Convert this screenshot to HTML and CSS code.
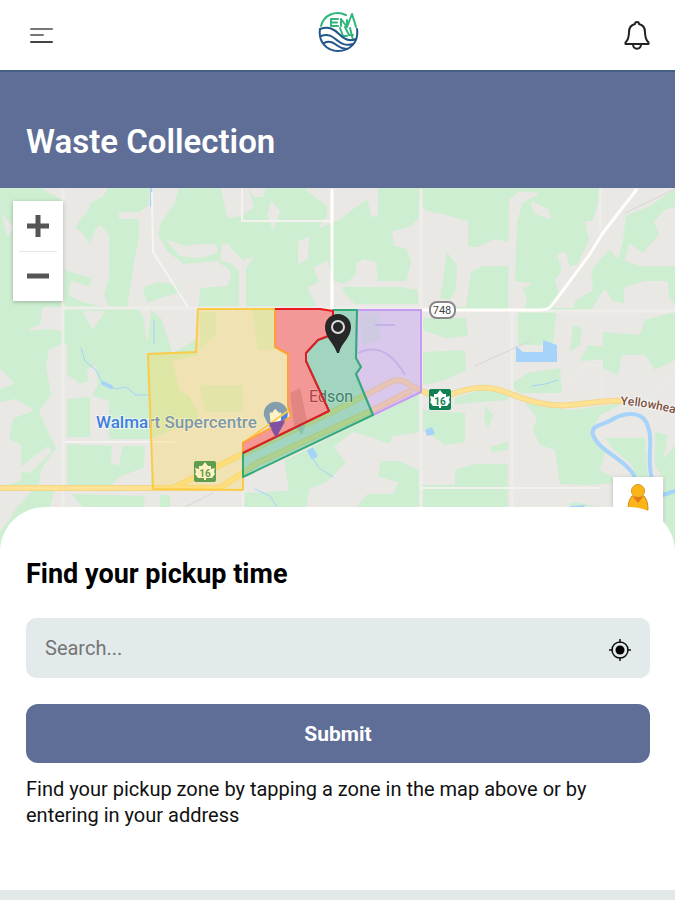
FILE: index.html
```html
<!DOCTYPE html>
<html lang="en">
<head>
<meta charset="utf-8">
<meta name="viewport" content="width=device-width, initial-scale=1">
<title>Waste Collection</title>
<link rel="stylesheet" href="styles.css">
</head>
<body>
<header class="topbar">
  <button class="icon-button" type="button" aria-label="Menu">
    <svg width="26" height="20" viewBox="0 0 26 20" fill="none" stroke-width="2" stroke-linecap="round">
      <path d="M3 4H24M3 10H15" stroke="#777"/><path d="M3 17H24" stroke="#444"/>
    </svg>
  </button>
  <a class="logo" href="#" aria-label="Home">
    <svg width="42" height="42" viewBox="0 0 42 42" fill="none" stroke-linecap="round" stroke-linejoin="round">
      <g stroke="#2fb67c" stroke-width="2">
        <path d="M3 15C6 4 17 -1 28 4"/>
        <path d="M20 8H13V15H20M14 11.500H19"/>
        <path d="M23 15V8L29 16L34 3L38 16M29 16V9"/>
        <path d="M22 17L25 25H29M27 16L31 24H35M32 17L35 29H31"/>
      </g>
      <g stroke="#24568a" stroke-width="2">
        <path d="M2 18C0 31 9 40 20 40C32 40 41 31 39 18"/>
        <path d="M2 18C11 15 16 18 21 23S32 31 38 28"/>
        <path d="M3 25C11 22 15 26 20 30S29 35 35 33"/>
        <path d="M6 32C12 29 16 32 20 35S26 38 29 38"/>
      </g>
    </svg>
  </a>
  <button class="icon-button" type="button" aria-label="Notifications">
    <svg width="26" height="30" viewBox="0 0 26 30" fill="none" stroke="#222" stroke-width="2" stroke-linejoin="round">
      <path d="M13 2C11.500 2 11 2.800 11 4C7 5 5 8 5 12C5 18 4 20 1.500 22.500V24H24.500V22.500C22 20 21 18 21 12C21 8 19 5 15 4C15 2.800 14.500 2 13 2Z"/>
      <path d="M9 24.500C9.500 30 16.500 30 17 24.500"/>
    </svg>
  </button>
</header>

<main>
  <div class="title-band"><h1>Waste Collection</h1></div>

  <section class="map" aria-label="Collection zones map">
    <svg class="map-art" viewBox="0 188 675 364" preserveAspectRatio="xMidYMin slice">
      <rect y="188" width="675" height="364" fill="#cdeed0"/>
      <!-- open land -->
      <g fill="#e9e8e5" stroke="#e9e8e5" stroke-width="2" stroke-linejoin="round">
        <path d="M43 188H107L102 196 90 202 87 211 80 218 74 228 83 235 91 247 95 232 100 226 108 235V278L103 295 108 307 83 301 70 295 72 282 90 288 93 277 67 270 63 265V200Z"/>
        <path d="M150 188H178L173 205 160 222 157 235 167 252 183 265 217 262 230 272 227 285 200 287 197 307H128L132 285 135 262 140 238V218H120V213L140 213 150 205Z"/>
        <path d="M168 241L185 247 200 245 215 245 217 252 200 257 180 255Z"/>
        <path d="M222 250L227 244 232 251 229 262 222 260ZM222 188H247L253 207 240 215 228 217ZM250 188H265L262 196 254 196Z"/>
        <path d="M43 308H63V330L43 328 30 330 41 325ZM84 312H103L93 328ZM140 310H150L147 338 145 318ZM153 310H197V338L173 352 162 318ZM3 216L12 227 8 235Z"/>
        <path d="M272 202L279 212 273 228 268 215ZM325 188H377V215L372 216 368 198 353 208 340 218 320 227 328 218V205L307 190ZM299 242L308 238 307 258 299 263Z"/>
        <path d="M222 245L237 255 243 262 252 258 245 268V307H240V270L225 258ZM220 265L230 278 220 285Z"/>
        <path d="M327 262L315 268 320 282 309 288 317 306H465L470 272 482 265H508V243L495 240 478 248H467V222L442 215 427 212 420 206V218L410 228 393 232 395 245 407 248 412 262 407 282H377L375 263 363 260 357 264V275L345 285 333 282Z"/>
        <path d="M510 200L520 192 537 194 522 202 516 222 514 282 530 284 522 288 526 300 522 312H509Z"/>
        <path d="M532 203L548 210 550 218 535 213ZM558 255L565 253 569 268 578 265 590 240 586 222 593 222 600 200V188H675L650 205 625 215 622 240 618 258 610 248 600 258 590 270 592 290 575 300 572 307H555L560 295 556 280 563 270Z"/>
        <path d="M675 208L665 211 655 222 660 235 643 254 630 245 626 260 640 265 675 265Z"/>
        <path d="M420 312H555L592 310 605 290 612 302 625 305V288L645 282 667 282 668 298 675 306V552H420Z"/>
        <path d="M47 367L50 350 61 345H66V375L80 385 90 382 88 370 95 367 97 385 90 396 66 398V485H40L42 470 57 448 40 412 52 395ZM0 370L13 383 0 388ZM0 403L15 400 32 410 12 418 8 440 20 445V480L0 486ZM18 470L48 447 50 452 30 472Z"/>
        <path d="M91 396L108 402V440H150V485H113L120 478 145 468 146 445H122L118 465 112 462 113 445 66 443V438H91ZM0 492H30L15 508 8 520 0 530ZM55 492H243V510H50Z"/>
        <path d="M245 478L283 460 288 490 245 492ZM353 433L335 447 347 463 327 483 310 490 307 510H353L367 493H393L397 483 377 477 380 460 400 460 420 470V433L393 437 390 445 367 437Z"/>
        <path d="M198 310H420V392L370 417 243 480V490H154L150 440 200 420 190 395 180 390 172 362 198 356Z"/>
      </g>
      <!-- parks and woods -->
      <g fill="#cdeed0">
        <path d="M143 288L157 282 177 285 180 292 160 298 147 303ZM343 287H400L418 290V304H355L343 292ZM447 252L457 265 456 290 450 300 440 298ZM475 295L480 305 508 306V267L482 267 478 280Z"/>
        <path d="M423 318L466 318 468 336 445 338 423 330ZM423 352L465 350 466 370 445 380 423 385ZM518 312H556L553 345H518ZM573 325L582 328 580 345 570 352ZM588 345L612 348 605 359 580 361Z"/>
        <path d="M603 332L640 335 645 320 675 312V360L655 370 645 355H622L618 375 603 368ZM528 373L560 368 562 393H520L510 385ZM455 398L480 390 508 392V400L480 402 455 405ZM423 410L465 413V442L445 445 423 430Z"/>
        <path d="M485 405L493 415 488 428 484 420ZM490 447L508 442V450L492 452ZM423 485H455V470L475 464H508V510H423ZM525 403L570 410 610 405 625 402 600 415 592 430 598 445 605 452 600 470 622 482 590 485 560 484 555 450 540 445 533 430 537 418Z"/>
        <path d="M605 438H645L648 480H636L632 465 612 448ZM655 432L668 435 663 460 675 445V552L664 520V480L655 465ZM565 505L575 502 600 507ZM72 494L145 496 143 510H85ZM160 495H170V510H160ZM650 332L675 324V340L660 345Z"/>
        <path d="M200 312H216V335L200 350ZM252 310H274V350H258ZM152 358H172L180 392 200 412 190 425 152 415ZM200 385H243V412H205ZM360 313H380V340L362 345Z" opacity=".7"/>
      </g>
      <!-- water -->
      <g fill="none" stroke="#a5d3fa" stroke-width="2" stroke-linecap="round">
        <path d="M151 189V206"/>
        <path d="M81 348L85 361 95 369 103 383 116 389 126 387 136 395 149 395M154 320V344M311 455L319 468 333 477M255 489L270 496 277 507M532 386L545 384 558 380" stroke-width="1"/>
        <path d="M310 449L315 458" stroke-width="7" stroke-linecap="butt"/>
        <path d="M103 383L111 387" stroke-width="4"/>
        <path d="M636 480C628 459 600 453 593 435C590 424 603 426 615 418C630 411 645 413 648 427C654 440 646 455 652 480M663 495L675 491" stroke-width="4"/>
      </g>
      <path d="M516 346L523 352H543V340L557 345V362H516ZM425 430L432 427 435 434 427 436ZM570 506L585 505 583 510H568Z" fill="#a5d3fa"/>
      <path d="M536 350L543 343V352Z" fill="#e9e8e5"/>
      <!-- minor roads -->
      <g fill="none" stroke="#eeede9" stroke-width="3">
        <path d="M63 189V510M63 308H430M421 189V510M512 312V510M600 189V230M508 311H675M243 480V510" />
        <path d="M242 189V221H332M63 442H175M421 488H600" stroke="#f3f2ef" stroke-width="2"/>
        <path d="M152 192L153 252 188 307" stroke="#f5f4f1" stroke-width="2"/>
        <path d="M569 381L584 365H602V400M640 407L675 370" stroke-width="1"/>
        <path d="M475 366L530 341M675 189L625 213M185 507L213 493" stroke="#d5d6d2" stroke-width="1"/>
      </g>
      <path d="M332 189V310M421 310H540Q549 310 552 305L590 254 602 234 637 189" fill="none" stroke="#fffefa" stroke-width="3"/>
      <!-- highways -->
      <g fill="none" stroke-linejoin="round">
        <path d="M0 488H173L230 460 330 413 393 381Q403 378 411 386L440 399 452 394C470 388 485 384 508 393S550 407 570 405S610 400 622 401M173 488H220L257 463 373 410 412 390" stroke="#f5d689" stroke-width="6"/>
        <path d="M0 488H173L230 460 330 413 393 381Q403 378 411 386L440 399 452 394C470 388 485 384 508 393S550 407 570 405S610 400 622 401M173 488H220L257 463 373 410 412 390" stroke="#fde293" stroke-width="4"/>
      </g>
      <path d="M358 353Q385 340 405 375M375 325H395" fill="none" stroke="#c9c6dc" stroke-width="2"/>
      <path d="M290 393L300 388 307 420 302 435 294 425Z" fill="#c9c6bd"/>
      <!-- map labels -->
      <g class="label">
        <text class="label-place" x="96" y="428">Walmart Supercentre</text>
        <text class="label-town" x="309" y="402">Edson</text>
        <path id="road-label" d="M621 405Q645 405 700 420" fill="none"/>
        <text class="label-road"><textPath href="#road-label">Yellowhea</textPath></text>
      </g>
      <g>
        <path d="M264 416A12 12 0 1 1 286 420L276 438 268 424Z" fill="#4b83df"/>
        <path d="M270 413H281L280 422H271ZM273 413Q275 406 278 413" fill="#fff" stroke="#fff"/>
      </g>
      <g>
        <rect x="194" y="461" width="22" height="21" rx="2" fill="#178252"/>
        <path d="M205 462L208 466 211 466V469L215 468 214 472 215 474 212 478 206 478V480H204V478L198 478 195 474 196 472 195 468 199 469V466L202 466Z" fill="#fff"/>
        <text class="shield-number" x="205" y="477">16</text>
      </g>
      <!-- collection zones -->
      <g stroke-width="2" stroke-linejoin="round">
        <path d="M198 309H275V347L288 354V411L243 443V490L153 489 148 354 196 352Z" fill="#ffd647" fill-opacity=".32" stroke="#fbcb47"/>
        <path d="M357 310H421V392L373 415 356 374 361 367 356 358Z" fill="#be8cf8" fill-opacity=".35" stroke="#c69bf3"/>
        <path d="M275 309H320L333 311V337H327L318 340 306 353V361L329 411 243 453V443L291 418 288 405V354L275 347Z" fill="#ff3838" fill-opacity=".45" stroke="none"/>
        <path d="M275 309V347L288 354V405L291 417 243 443V453" fill="none" stroke="#ffa03c"/>
        <path d="M333 310H357L356 358 361 367 356 374 373 415 243 477V453L329 411 306 361V353L318 340 327 337 333 333Z" fill="#38b986" fill-opacity=".4" stroke="#31ab78"/>
        <path d="M275 309H320L333 311V334L318 340 306 353V361L329 411 243 453" fill="none" stroke="#e81920"/>
      </g>
      <path d="M269 423L285 420 276 438Z" fill="#8151a1"/>
      <g>
        <rect x="429" y="389" width="22" height="21" rx="2" fill="#118154"/>
        <path d="M440 390L443 394 446 394V397L450 396 449 400 450 402 447 406 441 406V408H439V406L433 406 430 402 431 400 430 396 434 397V394L437 394Z" fill="#fff"/>
        <text class="shield-number" x="440" y="405">16</text>
      </g>
      <rect x="430" y="302" width="25" height="16" rx="7" fill="#fff" stroke="#888" stroke-width="2"/>
      <text class="route-number" x="442" y="314">748</text>
      <path d="M337 353C334 343 325 338 325 327A13 13 0 0 1 351 327C351 338 341 343 339 353Z" fill="#272727"/>
      <circle cx="338" cy="327" r="6" fill="none" stroke="#ddd" stroke-width="2"/>
    </svg>
    <div class="zoom-control">
      <button type="button" aria-label="Zoom in"><svg width="24" height="24" viewBox="0 0 24 24"><path d="M1 12H23M12 1V23" stroke="#555" stroke-width="5"/></svg></button>
      <button type="button" aria-label="Zoom out"><svg width="24" height="24" viewBox="0 0 24 24"><path d="M1 12H23" stroke="#555" stroke-width="5"/></svg></button>
    </div>
    <button class="street-view" type="button" aria-label="Street View">
      <svg width="24" height="38" viewBox="0 0 24 38"><path d="M6 13Q2 17 2 27L6 28V37H18V28L22 27Q22 17 18 13Z" fill="#fbb516" stroke="#c98a20"/><circle cx="12" cy="8" r="6.500" fill="#fbb516" stroke="#d79a22"/><path d="M7 14H17L12 20Z" fill="#e57a1b"/></svg>
    </button>
  </section>

  <section class="panel">
    <h2>Find your pickup time</h2>
    <form class="pickup-form">
      <div class="search">
        <input type="text" placeholder="Search..." aria-label="Search address">
        <button class="locate" type="button" aria-label="Use my location">
          <svg width="22" height="22" viewBox="0 0 22 22" fill="none" stroke="#111" stroke-width="1.500"><circle cx="11" cy="11" r="8"/><circle cx="11" cy="11" r="4.500" fill="#000" stroke="none"/><path d="M11 0V4M11 18V22M0 11H4M18 11H22"/></svg>
        </button>
      </div>
      <button class="submit" type="submit">Submit</button>
    </form>
    <p>Find your pickup zone by tapping a zone in the map above or by entering in your address</p>
  </section>
</main>
</body>
</html>
```
FILE: styles.css
```css
* { box-sizing: border-box; }

body {
  margin: 0;
  min-height: 100vh;
  background: #e3e9e9;
  color: #111;
  font-family: Roboto, "Liberation Sans", sans-serif;
}

button {
  padding: 0;
  border: 0;
  background: none;
  font: inherit;
  cursor: pointer;
}

svg { display: block; }

.topbar {
  display: grid;
  grid-template-columns: 1fr auto 1fr;
  align-items: center;
  height: 70px;
  padding: 0 25px 0 28px;
  background: #fff;
}

.icon-button { justify-self: start; }
.icon-button:last-child { justify-self: end; }
.logo { padding-bottom: 6px; }

.title-band {
  padding: 51px 26px 27px;
  border-top: 2px solid #456080;
  background: #5f6e96;
  color: #fff;
}

h1 {
  margin: 0;
  font-size: 33px;
  line-height: 38px;
  font-weight: 600;
}

.map {
  position: relative;
  height: 364px;
  overflow: hidden;
  background: #cdeed0;
}

.map-art { width: 100%; height: 100%; }

.label text {
  paint-order: stroke;
  stroke: #fff;
  stroke-opacity: 0.6;
  stroke-width: 2px;
}

.label-place { font-size: 17px; font-weight: 500; fill: #3f7de0; }
.label-town { font-size: 16px; fill: #555; }
.label-road { font-size: 12px; font-weight: 500; fill: #7b513f; }

.shield-number {
  font-size: 10px;
  font-weight: 700;
  text-anchor: middle;
  fill: #178252;
}

.route-number {
  font-size: 11px;
  text-anchor: middle;
  fill: #444;
}

.zoom-control {
  position: absolute;
  top: 13px;
  left: 13px;
  width: 50px;
  background: #fff;
  box-shadow: 0 1px 4px rgba(0, 0, 0, 0.25);
}

.zoom-control button {
  display: grid;
  place-items: center;
  width: 100%;
  height: 50px;
}

.zoom-control button + button::before {
  content: "";
  position: absolute;
  top: 50px;
  left: 6px;
  right: 6px;
  height: 1px;
  background: #e6e6e6;
}

.street-view {
  position: absolute;
  top: 289px;
  right: 12px;
  display: grid;
  place-items: center;
  width: 50px;
  height: 50px;
  background: #fff;
  box-shadow: 0 1px 4px rgba(0, 0, 0, 0.2);
}

.panel {
  position: relative;
  margin-top: -45px;
  padding: 51px 25px 62px 26px;
  border-radius: 45px 45px 0 0;
  background: #fff;
}

h2 {
  margin: 0 0 28px;
  color: #000;
  font-size: 27px;
  line-height: 32px;
  font-weight: 700;
}

.pickup-form {
  display: flex;
  flex-direction: column;
  gap: 26px;
}

.search {
  display: flex;
  align-items: center;
  height: 60px;
  padding: 0 19px;
  border-radius: 10px;
  background: #e3eaec;
}

.search input {
  flex: 1;
  min-width: 0;
  height: 100%;
  padding: 0;
  border: 0;
  outline: 0;
  background: none;
  color: #111;
  font: 20px Roboto, "Liberation Sans", sans-serif;
}

.search input::placeholder { color: #757575; }
.locate { padding-top: 4px; }

.submit {
  height: 59px;
  border-radius: 12px;
  background: #5f6e96;
  color: #fff;
  font-size: 21px;
  font-weight: 700;
}

.panel p {
  margin: 13px 0 0;
  font-size: 20px;
  line-height: 26px;
}
```
